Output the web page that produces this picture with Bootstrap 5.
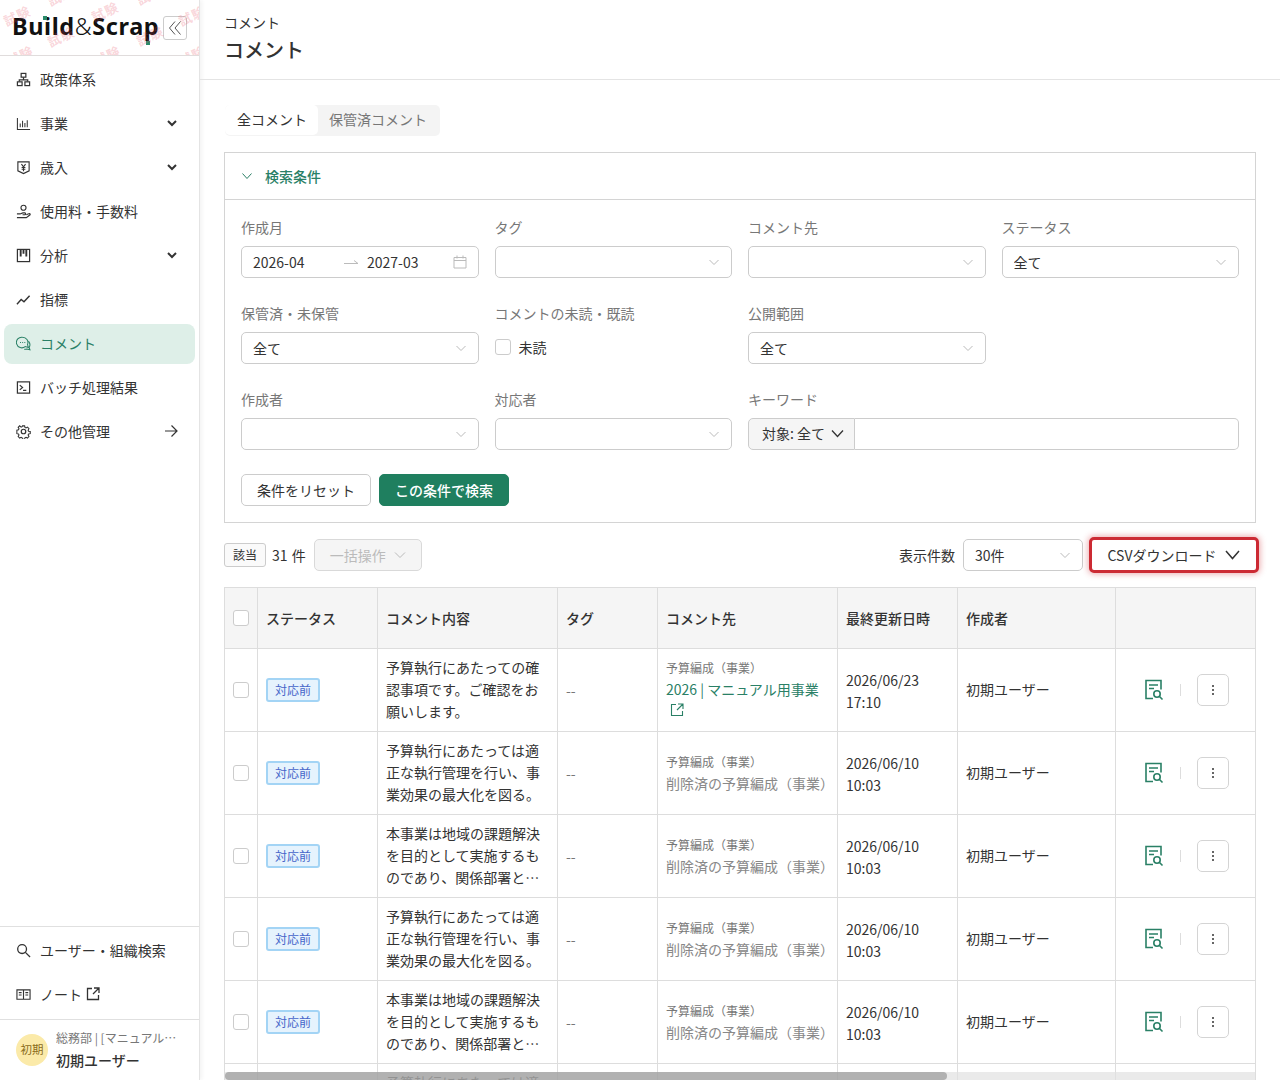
<!DOCTYPE html>
<html lang="ja">
<head>
    <meta charset="UTF-8">
    <title>コメント</title>
    <link href="https://cdn.jsdelivr.net/npm/bootstrap@5.3.0/dist/css/bootstrap.min.css" rel="stylesheet">
    <style>
        body {
            font-family: "Noto Sans CJK JP", "Noto Sans", sans-serif;
            font-size: 14px;
            color: #333;
            height: 1080px;
            overflow: hidden;
        }
        .side-bar {
            width: 200px;
            height: 1080px;
            flex-shrink: 0;
            border-right: 1px solid #e4e4e4;
            box-shadow: 2px 0 4px rgba(0, 0, 0, .05);
            background: #fff;
        }
        .logo-box {
            position: relative;
            height: 56px;
            overflow: hidden;
            border-bottom: 1px solid #e0dcdc;
            padding: 10px 12px 0;
        }
        .logo-text {
            position: relative;
            font-family: "Noto Sans", sans-serif;
            font-weight: 700;
            font-size: 23.5px;
            line-height: 32px;
            letter-spacing: .6px;
            color: #111;
            white-space: nowrap;
        }
        .logo-text .amp { font-weight: 300; }
        .logo-dot {
            position: absolute;
            width: 4px;
            height: 4px;
            background: #2a8a6a;
        }
        .wm-text {
            position: absolute;
            color: rgba(232, 80, 100, .24);
            font-size: 13px;
            font-weight: 700;
            letter-spacing: 1px;
            transform: rotate(-25deg);
            white-space: nowrap;
        }
        .fold-btn {
            position: absolute;
            right: 12px;
            top: 16px;
            width: 24px;
            height: 24px;
            border: 1px solid #ccc;
            border-radius: 3px;
            background: #fff;
            display: flex;
            align-items: center;
            justify-content: center;
        }
        .side-link {
            height: 44px;
            padding: 0 16px 2px;
            gap: 9px;
            color: #333;
            font-size: 14px;
            line-height: 22px;
        }
        .side-link svg.nav-ico { width: 15px; height: 15px; flex-shrink: 0; }
        .side-link.is-on {
            height: 40px;
            margin: 2px 4px;
            padding: 0 12px 2px;
            background: #deefe8;
            border-radius: 8px;
            color: #2a8066;
        }
        .side-link .tail { margin-left: auto; margin-right: 5px; }
        .side-nav { padding-top: 2px; }
        .side-bottom { border-top: 1px solid #e0e0e0; padding: 2px 0; }
        .user-box {
            border-top: 1px solid #e0e0e0;
            height: 61px;
            padding: 0 16px;
            gap: 8px;
        }
        .user-mark {
            width: 32px;
            height: 32px;
            border-radius: 50%;
            background: #fbeaa9;
            color: #8a6a1a;
            font-size: 11.5px;
            flex-shrink: 0;
        }
        .user-org { font-size: 12px; color: #777; line-height: 20px; width: 124px; }
        .user-name { font-size: 14px; line-height: 24px; font-weight: 500; color: #333; }

        .main-area { min-width: 0; height: 1080px; overflow: hidden; }
        .page-top {
            height: 80px;
            border-bottom: 1px solid #e4e4e4;
            padding: 12px 24px 0;
        }
        .page-crumb { font-size: 14px; line-height: 20px; }
        .page-title { font-size: 20px; line-height: 34px; font-weight: 500; margin: 1px 0 0; }
        .page-inner { padding: 25px 24px 0 24px; }

        .tab-wrap {
            display: inline-flex;
            background: #f4f4f4;
            border-radius: 5px;
            height: 31px;
            margin-left: 1px;
            margin-bottom: 16px;
        }
        .tab-item {
            padding: 0 13px 0 11px;
            line-height: 29px;
            color: #777;
            font-size: 14px;
            height: 30px;
            border-radius: 5px;
        }
        .tab-item.is-on { background: #fff; color: #333; padding: 0 11px 0 12px; }

        .filter-box { border: 1px solid #d4d4d4; border-radius: 0; margin-bottom: 16px; }
        .filter-head {
            height: 47px;
            background: #fff;
            border-bottom: 1px solid #d4d4d4;
            padding: 0 16px;
            gap: 12px;
            color: #2a8066;
            font-weight: 500;
            border-radius: 0 !important;
        }
        .filter-body { padding: 16px; }
        .field-label { color: #777; line-height: 22px; margin-bottom: 8px; font-size: 14px; display: block; }
        .field-cell { margin-bottom: 24px; }
        .sel-box {
            height: 32px;
            padding: 0 24px 0 11px;
            font-size: 14px;
            color: #333;
            border: 1px solid #ccc;
            border-radius: 5px;
            background-image: url("data:image/svg+xml,%3csvg xmlns='http://www.w3.org/2000/svg' viewBox='0 0 12 12'%3e%3cpath fill='none' stroke='%23bbb' stroke-width='1' d='M1.5 4l4.5 4.5L10.500 4'/%3e%3c/svg%3e");
            background-size: 12px 12px;
            background-position: right 11px center;
        }
        .date-box {
            height: 32px;
            border: 1px solid #ccc;
            border-radius: 5px;
            padding: 0 11px;
        }
        .date-val { width: 91px; }
        .date-arrow { width: 23px; }
        .key-btn {
            height: 32px;
            padding: 0 10px 2px 13px;
            background: #f5f5f5;
            border: 1px solid #ccc;
            border-radius: 5px 0 0 5px;
            font-size: 14px;
            color: #333;
            gap: 6px;
        }
        .key-input { height: 32px; border: 1px solid #ccc; border-left: 0; border-radius: 0 5px 5px 0; }
        .unread-box { height: 32px; gap: 8px; margin: 0; min-height: 0; padding: 0 0 2px; }
        .unread-box .form-check-input { width: 16px; height: 16px; margin: 0; border-color: #ccc; border-radius: 3px; float: none; }
        .btn-reset {
            height: 32px;
            width: 130px;
            padding: 0;
            border: 1px solid #ccc;
            border-radius: 5px;
            font-size: 14px;
            color: #333;
            background: #fff;
        }
        .btn-find {
            height: 32px;
            width: 130px;
            padding: 0;
            background: #1f7f5f;
            border: 1px solid #1f7f5f;
            border-radius: 5px;
            color: #fff;
            font-size: 14px;
            font-weight: 500;
        }

        .tool-row { height: 32px; margin-bottom: 16px; }
        .hit-tag {
            border: 1px solid #ccc;
            border-radius: 3px;
            background: #fafafa;
            font-size: 12px;
            height: 24px;
            line-height: 21px;
            padding: 0 8px;
            margin-right: 6px;
        }
        .hit-num { margin-right: 8px; word-spacing: 1px; }
        .bulk-btn, .bulk-btn:disabled {
            height: 32px;
            width: 108px;
            background: #f5f5f5;
            border: 1px solid #d9d9d9;
            border-radius: 5px;
            color: #bbb;
            font-size: 14px;
            gap: 8px;
            opacity: 1;
        }
        .per-sel { width: 120px; margin-left: 8px; }
        .csv-btn {
            height: 32px;
            width: 166px;
            margin: 0 -1px 0 8px;
            background: #fff;
            border-radius: 3px;
            font-size: 14px;
            color: #333;
            outline: 3px solid #cc2a33;
            outline-offset: -1px;
            border: 0;
            box-shadow: 0 0 6px 3px rgba(204, 42, 51, .4);
            gap: 9px;
        }

        .list-wrap { position: relative; }
        .list-table {
            table-layout: fixed;
            width: 1031px;
            margin: 0;
            border-color: #ddd;
            color: #333;
        }
        .list-table > * > * > * { padding: 8px; vertical-align: middle; color: #333; line-height: 22px; }
        .list-table > tbody > tr > .up-cell { padding: 7px 8px 9px; }
        .list-table > tbody > tr > .down-cell { padding: 9px 8px 7px; }
        .list-table thead th { background: #f5f5f5; font-weight: 500; height: 61px; }
        .list-table tbody td { height: 83px; }
        .list-table .form-check-input { display: block; width: 16px; height: 16px; margin: 0 auto; border-color: #ccc; border-radius: 3px; float: none; }
        .list-table .act-cell {
            position: sticky;
            right: 0;
            box-shadow: -5px 0 5px -2px rgba(0, 0, 0, .12);
        }
        .state-tag {
            display: block;
            width: 54px;
            height: 24px;
            line-height: 20px;
            text-align: center;
            font-size: 12px;
            color: #4565c9;
            background: #e6f3fd;
            border: 2px solid #a3d4f5;
            border-radius: 3px;
        }
        .clamp-text {
            display: -webkit-box;
            -webkit-line-clamp: 3;
            -webkit-box-orient: vertical;
            overflow: hidden;
        }
        .to-kind { font-size: 12px; color: #777; line-height: 20px; }
        .to-link { color: #2a8066; text-decoration: none; }
        .to-link svg { margin-left: 4px; vertical-align: 0; }
        .list-table td.empty-mark { color: #777; }
        .list-table .to-gone { color: #888; }
        .act-row { padding-left: 20px; }
        .act-sep { width: 1px; height: 12px; background: #ddd; margin: 0 16px; }
        .more-btn {
            width: 32px;
            height: 32px;
            border: 1px solid #d4d4d4;
            border-radius: 5px;
            padding: 0;
            background: #fff;
        }
        .bar-track {
            position: absolute;
            left: 1px;
            top: 485px;
            width: 1030px;
            height: 8px;
            background: rgba(225, 225, 225, .7);
            z-index: 3;
        }
        .bar-thumb {
            width: 722px;
            height: 8px;
            background: rgba(120, 120, 120, .5);
            border-radius: 4px;
        }
    </style>
</head>
<body>
<div class="d-flex">
    <!-- sidebar -->
    <div class="side-bar d-flex flex-column">
        <div class="logo-box">
            <div class="logo-text">Build<span class="amp">&amp;</span>Scrap</div>
            <span class="logo-dot" style="left:43px;top:16px"></span>
            <span class="logo-dot" style="left:146px;top:41px"></span>
            <div class="fold-btn">
                <svg width="14" height="16" viewBox="0 0 14 16" fill="none" stroke="#555" stroke-width="1"><path d="M7 1.500L1.500 8 7 14.500M12.500 1.500L7 8l5.500 6.500"/></svg>
            </div>
            <!-- watermark -->
            <span class="wm-text" style="left:3px;top:6px">試験</span>
            <span class="wm-text" style="left:47px;top:-14px">試験</span>
            <span class="wm-text" style="left:91px;top:2px">試験</span>
            <span class="wm-text" style="left:136px;top:-15px">試験</span>
            <span class="wm-text" style="left:178px;top:6px">試験</span>
            <span class="wm-text" style="left:47px;top:27px">試験</span>
            <span class="wm-text" style="left:136px;top:26px">試験</span>
            <span class="wm-text" style="left:6px;top:46px">試験</span>
            <span class="wm-text" style="left:93px;top:46px">試験</span>
            <span class="wm-text" style="left:178px;top:46px">試験</span>
        </div>
        <nav class="nav flex-column side-nav">
            <a class="nav-link side-link d-flex align-items-center">
                <svg class="nav-ico" viewBox="0 0 16 16" fill="none" stroke="#333" stroke-width="1.300"><rect x="5.500" y="1.500" width="5" height="4"/><path d="M8 5.500v3M3.500 10V8.500h9V10"/><rect x="1.500" y="10.500" width="5" height="4"/><rect x="9.500" y="10.500" width="5" height="4"/></svg>
                政策体系
            </a>
            <a class="nav-link side-link d-flex align-items-center">
                <svg class="nav-ico" viewBox="0 0 16 16" fill="none" stroke="#333" stroke-width="1.100"><path d="M1.500 2v12.500H15M4.500 12V8M7 12V5M9.500 12V7.500M12 12V4.500"/></svg>
                事業
                <svg class="tail" width="12" height="12" viewBox="0 0 12 12" fill="none" stroke="#333" stroke-width="2"><path d="M2 4l4 4 4-4"/></svg>
            </a>
            <a class="nav-link side-link d-flex align-items-center">
                <svg class="nav-ico" viewBox="0 0 16 16" fill="none" stroke="#333" stroke-width="1.200"><path d="M2 2h12v9.500L8 14.500l-6-3z"/><path d="M5.800 4.500L8 7.300l2.200-2.800M8 7.300V12M6 8h4M6 9.800h4"/></svg>
                歳入
                <svg class="tail" width="12" height="12" viewBox="0 0 12 12" fill="none" stroke="#333" stroke-width="2"><path d="M2 4l4 4 4-4"/></svg>
            </a>
            <a class="nav-link side-link d-flex align-items-center">
                <svg class="nav-ico" viewBox="0 0 16 16" fill="none" stroke="#333" stroke-width="1.200"><circle cx="8" cy="4" r="2.700"/><path d="M1 10.500h3.500c1 0 1.500-1 3-1h2c1 0 1 2 0 2H7M1 14.500h10l4-3c.5-1-.5-1.500-1.500-1l-2.500 1"/></svg>
                使用料・手数料
            </a>
            <a class="nav-link side-link d-flex align-items-center">
                <svg class="nav-ico" viewBox="0 0 16 16" fill="none" stroke="#333" stroke-width="1.300"><rect x="1.500" y="1.500" width="13" height="13"/><path d="M5 2v7M8 2v4M11 2v7" stroke-width="2"/></svg>
                分析
                <svg class="tail" width="12" height="12" viewBox="0 0 12 12" fill="none" stroke="#333" stroke-width="2"><path d="M2 4l4 4 4-4"/></svg>
            </a>
            <a class="nav-link side-link d-flex align-items-center">
                <svg class="nav-ico" viewBox="0 0 16 16" fill="none" stroke="#333" stroke-width="1.500"><path d="M1 13l4.500-5 3 2.500L14.500 4"/></svg>
                指標
            </a>
            <a class="nav-link side-link is-on d-flex align-items-center">
                <svg class="nav-ico" viewBox="0 0 16 16" fill="none" stroke="#2a8066" stroke-width="1.100"><path d="M7 1.300a5.700 5.700 0 0 1 5.300 7.800l.9 3.100-3.400-.9A5.700 5.700 0 1 1 7 1.300z"/><path d="M13.300 5.500c2 2.600 1.800 5 .7 6.600l.9 2.600-3.200-.9c-1 .4-2 .5-3 .2"/><path d="M4.300 7h1M6.600 7h1M8.900 7h1"/></svg>
                コメント
            </a>
            <a class="nav-link side-link d-flex align-items-center">
                <svg class="nav-ico" viewBox="0 0 16 16" fill="none" stroke="#333" stroke-width="1.300"><rect x="1.500" y="2" width="13" height="12"/><path d="M4 5.500L7 8l-3 2.500M7.500 11H11"/></svg>
                バッチ処理結果
            </a>
            <a class="nav-link side-link d-flex align-items-center">
                <svg class="nav-ico" viewBox="0 0 16 16" fill="none" stroke="#333" stroke-width="1.300"><circle cx="8" cy="8" r="2.400"/><path d="M6.700 1h2.600l.4 2 1.300.6 1.800-1 1.800 1.900-1 1.800.6 1.300 2 .4v2.600l-2 .4-.6 1.300 1 1.800-1.800 1.900-1.800-1-1.300.6-.4 2H6.700l-.4-2-1.300-.6-1.800 1-1.800-1.900 1-1.800-.6-1.300-2-.4V6.300l2-.4.6-1.300-1-1.800L3.200 1 5 2.600l1.300-.6z" transform="translate(1.100 1.100) scale(.87)"/></svg>
                その他管理
                <svg class="tail" width="14" height="14" viewBox="0 0 14 14" fill="none" stroke="#333" stroke-width="1.200"><path d="M1 7h12M7.500 1.500L13 7l-5.500 5.500"/></svg>
            </a>
        </nav>
        <div class="side-bottom mt-auto">
            <a class="nav-link side-link d-flex align-items-center">
                <svg class="nav-ico" viewBox="0 0 16 16" fill="none" stroke="#333" stroke-width="1.400"><circle cx="6.500" cy="6.500" r="4.700"/><path d="M10 10l5 5"/></svg>
                ユーザー・組織検索
            </a>
            <a class="nav-link side-link d-flex align-items-center">
                <svg class="nav-ico" viewBox="0 0 16 16" fill="none" stroke="#333" stroke-width="1.200"><path d="M1 3h14v10H1zM8 3v10M3 6h3M3 8.500h3M10 6h3M10 8.500h3"/></svg>
                <span class="d-flex align-items-center gap-1">ノート
                <svg width="14" height="14" viewBox="0 0 14 14" fill="none" stroke="#333" stroke-width="1.300"><path d="M6 1.500H1.500v11h11V8M8 1h5v5M13 1L7 7"/></svg></span>
            </a>
        </div>
        <div class="user-box d-flex align-items-center">
            <div class="user-mark d-flex align-items-center justify-content-center">初期</div>
            <div>
                <div class="user-org text-truncate">総務部 | [マニュアル用組織]</div>
                <div class="user-name">初期ユーザー</div>
            </div>
        </div>
    </div>

    <!-- main -->
    <div class="flex-grow-1 main-area">
        <div class="page-top">
            <div class="page-crumb">コメント</div>
            <h1 class="page-title">コメント</h1>
        </div>
        <div class="page-inner">
            <div class="tab-wrap">
                <div class="tab-item is-on">全コメント</div>
                <div class="tab-item">保管済コメント</div>
            </div>

            <div class="card filter-box">
                <div class="card-header filter-head d-flex align-items-center">
                    <svg width="12" height="12" viewBox="0 0 12 12" fill="none" stroke="#2a8066" stroke-width="1"><path d="M1.500 3.500L6 8.500l4.500-5"/></svg>
                    検索条件
                </div>
                <div class="card-body filter-body">
                    <div class="row gx-3">
                        <div class="col-3 field-cell">
                            <label class="field-label">作成月</label>
                            <div class="date-box d-flex align-items-center">
                                <span class="date-val">2026-04</span>
                                <svg class="date-arrow" width="14" height="8" viewBox="0 0 23 8" fill="none" stroke="#bbb"><path d="M0 5.500h14M10 2.500l4 3"/></svg>
                                <span>2027-03</span>
                                <svg class="ms-auto" width="14" height="14" viewBox="0 0 14 14" fill="none" stroke="#bbb"><path d="M1 2.500h12v10.500H1zM1 5.500h12M4 .5v3M10 .5v3"/></svg>
                            </div>
                        </div>
                        <div class="col-3 field-cell">
                            <label class="field-label">タグ</label>
                            <select class="form-select sel-box"></select>
                        </div>
                        <div class="col-3 field-cell">
                            <label class="field-label">コメント先</label>
                            <select class="form-select sel-box"></select>
                        </div>
                        <div class="col-3 field-cell">
                            <label class="field-label">ステータス</label>
                            <select class="form-select sel-box"><option>全て</option></select>
                        </div>

                        <div class="col-3 field-cell">
                            <label class="field-label">保管済・未保管</label>
                            <select class="form-select sel-box"><option>全て</option></select>
                        </div>
                        <div class="col-3 field-cell">
                            <label class="field-label">コメントの未読・既読</label>
                            <div class="form-check unread-box d-flex align-items-center">
                                <input class="form-check-input" type="checkbox">
                                <label class="form-check-label">未読</label>
                            </div>
                        </div>
                        <div class="col-3 field-cell">
                            <label class="field-label">公開範囲</label>
                            <select class="form-select sel-box"><option>全て</option></select>
                        </div>
                        <div class="col-3 field-cell"></div>

                        <div class="col-3 field-cell">
                            <label class="field-label">作成者</label>
                            <select class="form-select sel-box"></select>
                        </div>
                        <div class="col-3 field-cell">
                            <label class="field-label">対応者</label>
                            <select class="form-select sel-box"></select>
                        </div>
                        <div class="col-6 field-cell">
                            <label class="field-label">キーワード</label>
                            <div class="d-flex">
                                <button class="btn key-btn d-flex align-items-center flex-shrink-0">対象: 全て
                                    <svg width="13" height="13" viewBox="0 0 13 13" fill="none" stroke="#333" stroke-width="1.300"><path d="M1 3.500l5.500 6 5.500-6"/></svg>
                                </button>
                                <input class="form-control key-input" type="text">
                            </div>
                        </div>
                    </div>
                    <div class="d-flex gap-2">
                        <button class="btn btn-reset">条件をリセット</button>
                        <button class="btn btn-find">この条件で検索</button>
                    </div>
                </div>
            </div>

            <div class="tool-row d-flex align-items-center">
                <span class="hit-tag">該当</span>
                <span class="hit-num">31 件</span>
                <button class="btn bulk-btn d-flex align-items-center justify-content-center" disabled>一括操作
                    <svg width="12" height="12" viewBox="0 0 12 12" fill="none" stroke="#bbb"><path d="M1 3.500L6 8.500l5-5"/></svg>
                </button>
                <span class="ms-auto">表示件数</span>
                <select class="form-select sel-box per-sel"><option>30件</option></select>
                <button class="btn csv-btn d-flex align-items-center justify-content-center">CSVダウンロード
                    <svg width="15" height="14" viewBox="0 0 15 14" fill="none" stroke="#333" stroke-width="1.500"><path d="M1 3L7.500 10.500 14 3"/></svg>
                </button>
            </div>

            <div class="list-wrap">
                <table class="table table-bordered list-table">
                    <colgroup>
                        <col style="width:33px"><col style="width:120px"><col style="width:180px"><col style="width:100px"><col style="width:180px"><col style="width:120px"><col style="width:158px"><col style="width:140px">
                    </colgroup>
                    <thead>
                        <tr>
                            <th><input class="form-check-input" type="checkbox"></th>
                            <th>ステータス</th>
                            <th>コメント内容</th>
                            <th>タグ</th>
                            <th>コメント先</th>
                            <th>最終更新日時</th>
                            <th>作成者</th>
                            <th class="act-cell"></th>
                        </tr>
                    </thead>
                    <tbody id="list-body"></tbody>
                </table>
                <div class="bar-track"><div class="bar-thumb"></div></div>
            </div>
        </div>
    </div>
</div>

<script src="https://cdn.jsdelivr.net/npm/bootstrap@5.3.0/dist/js/bootstrap.bundle.min.js"></script>
<script>
    const textA = '予算執行にあたっての確認事項です。ご確認をお願いします。';
    const textB = '予算執行にあたっては適正な執行管理を行い、事業効果の最大化を図る。';
    const textC = '本事業は地域の課題解決を目的として実施するものであり、関係部署と連携して進めます。';
    const rows = [
        { text: textA, date: '2026/06/23', time: '17:10', live: true },
        { text: textB, date: '2026/06/10', time: '10:03' },
        { text: textC, date: '2026/06/10', time: '10:03' },
        { text: textB, date: '2026/06/10', time: '10:03' },
        { text: textC, date: '2026/06/10', time: '10:03' },
        { text: textB, date: '2026/06/10', time: '10:03' }
    ];
    const extIcon = '<svg width="14" height="14" viewBox="0 0 14 14" fill="none" stroke="#2a8066" stroke-width="1.100"><path d="M6 1.500H1.500v11h11V8M8 1h5v5M13 1L7 7"/></svg>';
    const docIcon = '<svg width="20" height="22" viewBox="0 0 20 22" fill="none" stroke="#2a8066" stroke-width="1.600"><path d="M9 19.500H2V1.500h15v9"/><path d="M5 6h9M5 9.500h5"/><circle cx="13" cy="15" r="3.200"/><path d="M15.500 17.500l3 3"/></svg>';
    const dotIcon = '<svg width="4" height="12" viewBox="0 0 4 12" fill="#333"><circle cx="2" cy="2" r="1"/><circle cx="2" cy="6" r="1"/><circle cx="2" cy="10" r="1"/></svg>';

    document.getElementById('list-body').innerHTML = rows.map(r => `
        <tr>
            <td><input class="form-check-input" type="checkbox"></td>
            <td><span class="state-tag">対応前</span></td>
            <td class="up-cell"><div class="clamp-text">${r.text}</div></td>
            <td class="empty-mark">--</td>
            <td>
                <div class="to-kind">予算編成（事業）</div>
                ${r.live ? `<a class="to-link">2026 | マニュアル用事業 ${extIcon}</a>` : '<span class="to-gone">削除済の予算編成（事業）</span>'}
            </td>
            <td class="down-cell">${r.date}<br>${r.time}</td>
            <td class="up-cell">初期ユーザー</td>
            <td class="act-cell">
                <div class="d-flex align-items-center act-row">
                    ${docIcon}
                    <span class="act-sep"></span>
                    <button class="btn more-btn d-flex align-items-center justify-content-center">${dotIcon}</button>
                </div>
            </td>
        </tr>`).join('');
</script>
</body>
</html>
